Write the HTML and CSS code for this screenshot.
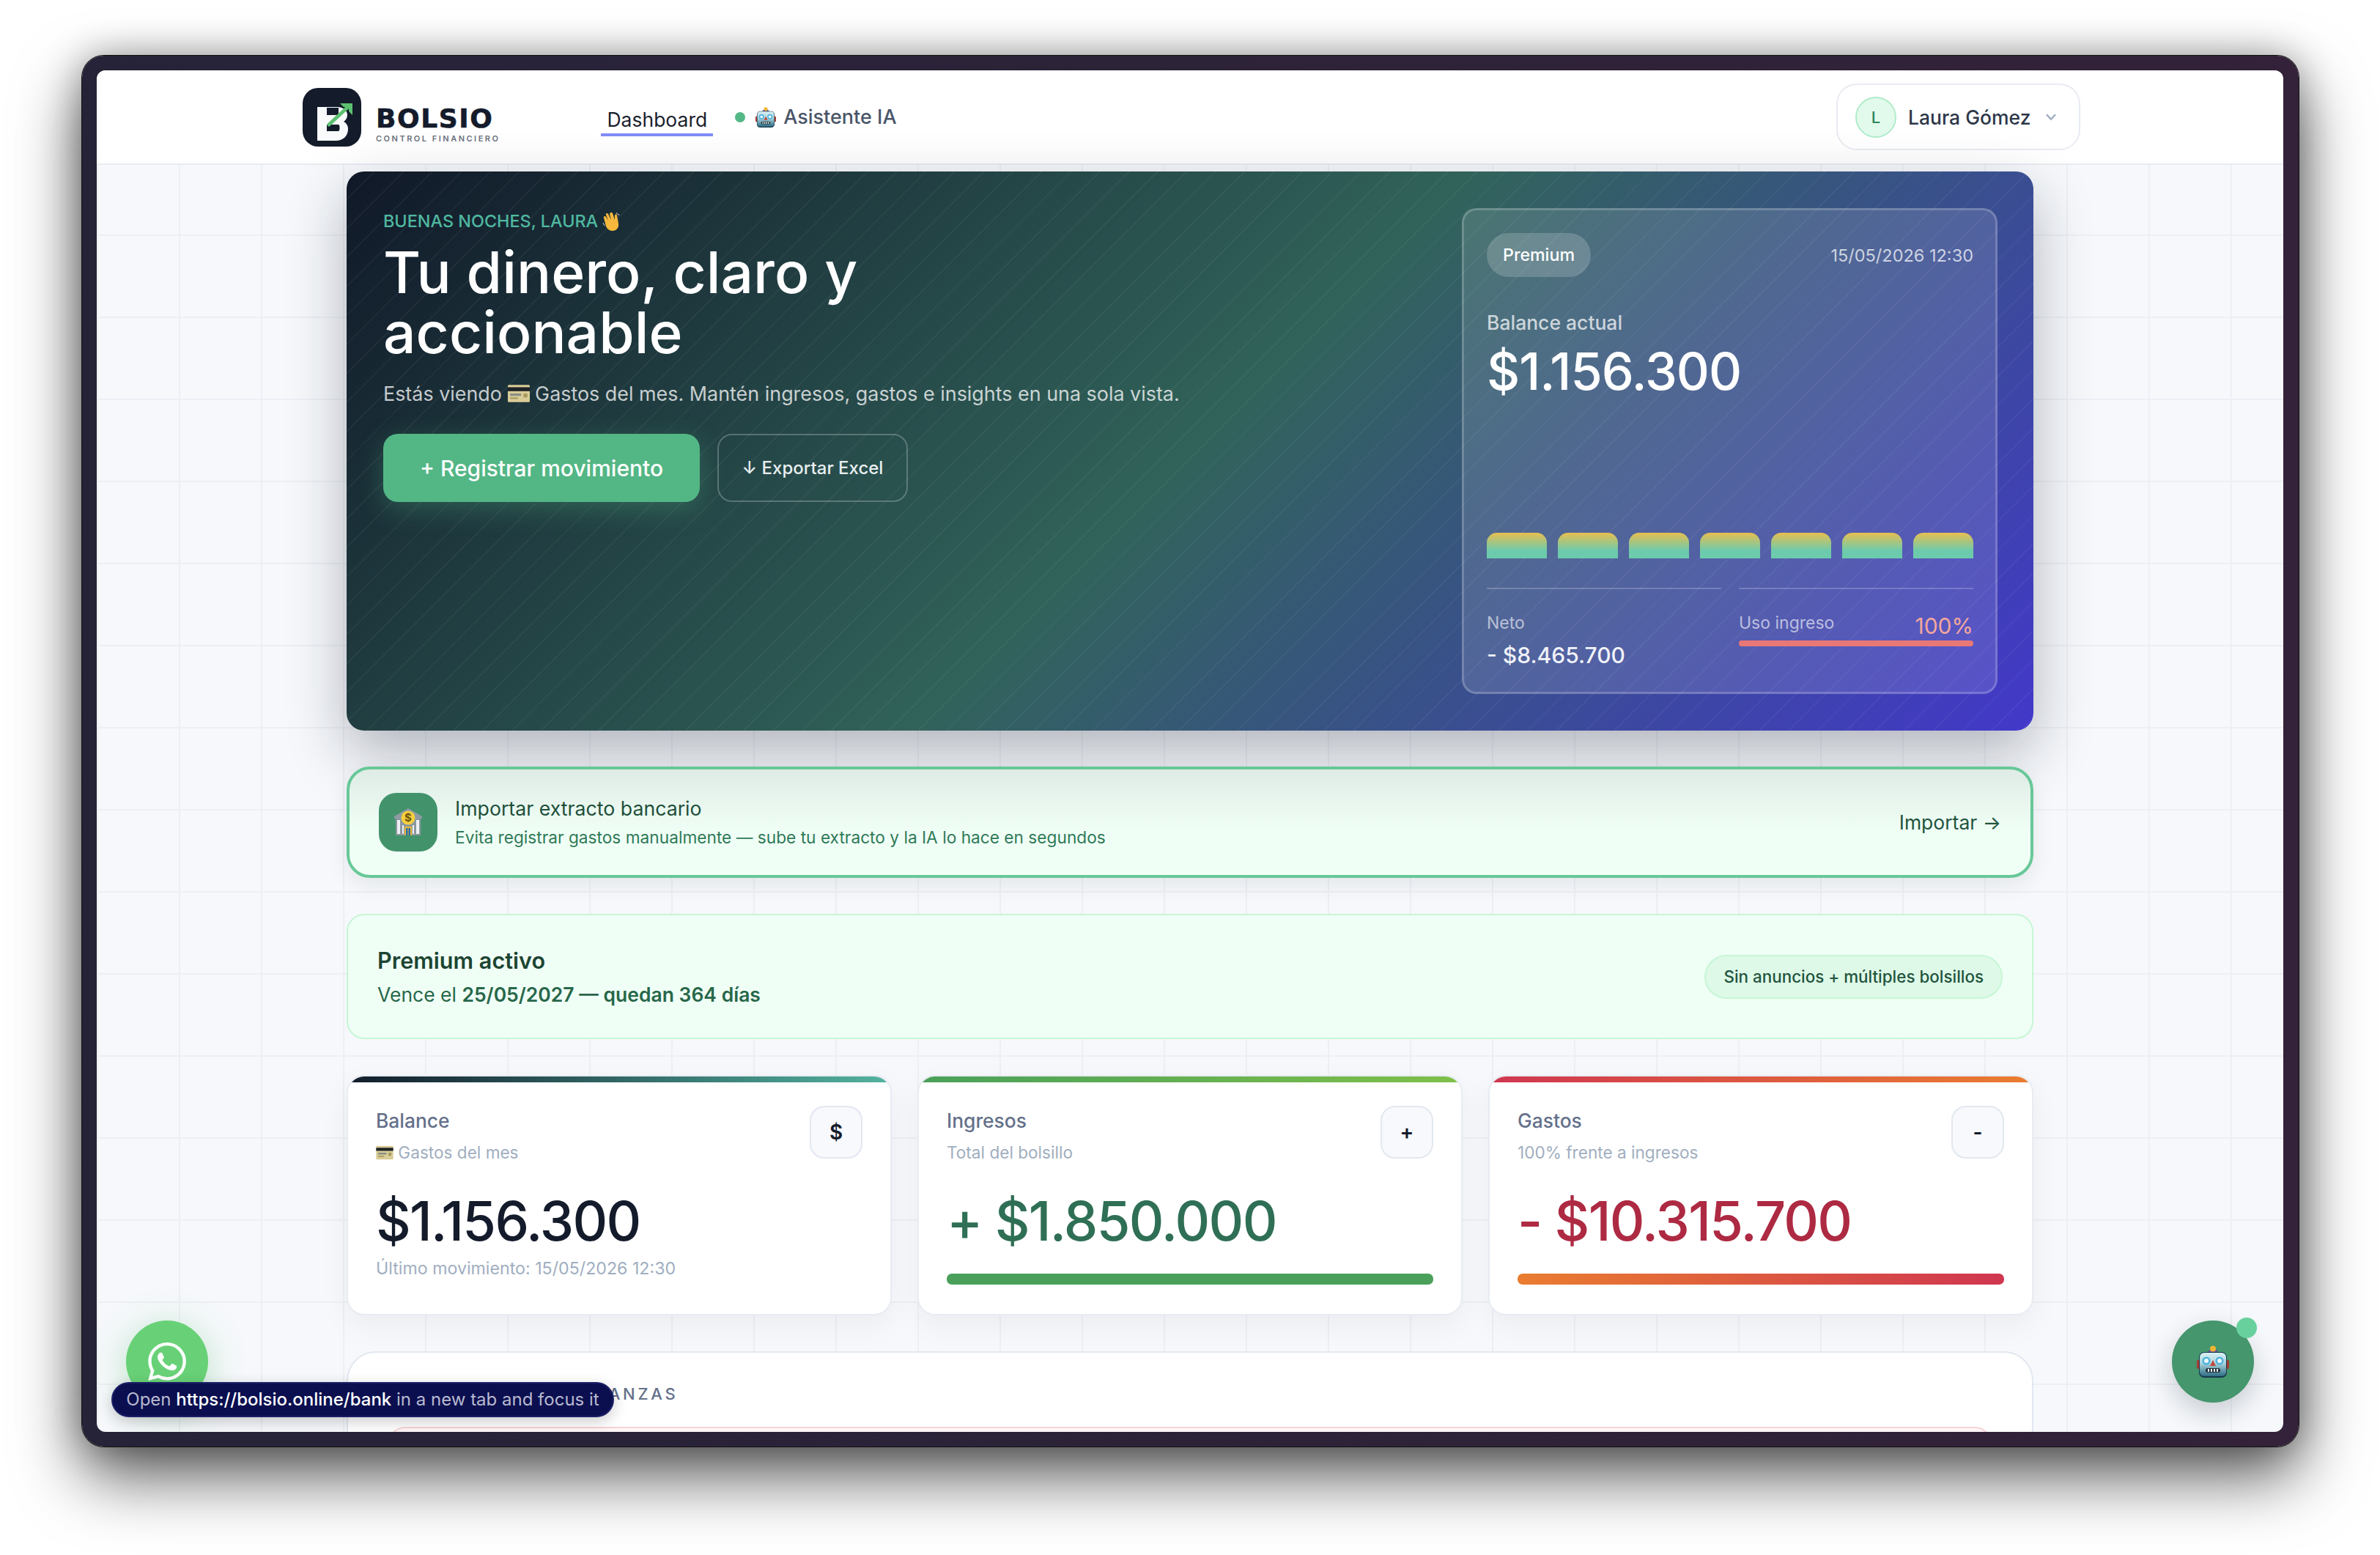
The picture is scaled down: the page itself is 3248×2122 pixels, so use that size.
FILE: index.html
```html
<!DOCTYPE html>
<html lang="es">
<head>
  <meta charset="UTF-8" />
  <title>Bolsio - Dashboard</title>
  <link rel="stylesheet" href="styles.css">
</head>
<body>
  <svg class="sprite" xmlns="http://www.w3.org/2000/svg">
    <defs>
      <linearGradient id="robotFace" x1="0" y1="0" x2="0" y2="1">
        <stop offset="0" stop-color="#d8f0f4"/>
        <stop offset="0.45" stop-color="#a9d3dc"/>
        <stop offset="1" stop-color="#2f6d84"/>
      </linearGradient>
    </defs>
    <symbol id="robot" viewBox="0 0 44 44">
      <rect x="0" y="20" width="5" height="12" rx="2" fill="#a83a34"/>
      <rect x="39" y="20" width="5" height="12" rx="2" fill="#a83a34"/>
      <path d="M15 10a7 5 0 0 1 14 0z" fill="#6a4f9c"/>
      <circle cx="22" cy="4.500" r="4" fill="#f2b632"/>
      <rect x="3" y="9" width="38" height="35" rx="7" fill="#173a4d"/>
      <rect x="4" y="10" width="36" height="32" rx="6" fill="url(#robotFace)"/>
      <circle cx="13" cy="21" r="5.500" fill="#4fb2de"/>
      <circle cx="13" cy="21" r="3" fill="#f0f9fb"/>
      <circle cx="31" cy="21" r="5.500" fill="#4fb2de"/>
      <circle cx="31" cy="21" r="3" fill="#f0f9fb"/>
      <path d="M22 20l4 8h-8z" fill="#c2483d"/>
      <rect x="12" y="31" width="20" height="6" rx="3" fill="#22303a"/>
      <path d="M16 32v4M20 32v4M24 32v4M28 32v4" stroke="#eef3f5" stroke-width="2"/>
    </symbol>
    <symbol id="card" viewBox="0 0 28 24">
      <rect x="0" y="1" width="28" height="22" rx="1.500" fill="#d9cc96"/>
      <rect x="0" y="4" width="28" height="5" fill="#1e2228"/>
      <rect x="3" y="12" width="14" height="3" fill="#8a8f86"/>
      <rect x="20" y="12" width="5" height="5" fill="#a89a5f"/>
      <rect x="3" y="17" width="10" height="2" fill="#a89a5f"/>
    </symbol>
    <symbol id="wave" viewBox="0 0 24 26">
      <path d="M2 8c-1-2 2-3 3-1l3 5L5 4c-1-2 2-3 3-1l4 8-2-8c0-2 3-3 4-1l3 9 0-6c0-2 3-2 3 0l2 11c1 6-3 10-8 10-4 0-7-2-9-6z" fill="#f5b83d"/>
      <path d="M19 1l2 3M22 3l1 2M1 15l2 4" stroke="#c9d8e0" stroke-width="1" fill="none"/>
    </symbol>
  </svg>

  <div class="frame">
    <div class="screen">
      <header class="topbar">
        <div class="brand">
          <svg class="brand-mark" viewBox="0 0 80 80">
            <rect width="80" height="80" rx="21" fill="#141b2b"/>
            <path fill-rule="evenodd" d="M20 26h27c9 0 14 5 14 11 0 4-2 7-5 9 4 2 6 6 6 10 0 9-6 16-17 16H20zM33 27v10h16V27zM33 50v9h16c2 0 2-9 0-9z" fill="#f8fafc"/>
            <path d="M36 50L64 24" stroke="#5cc071" stroke-width="5" stroke-linecap="round"/>
            <path d="M51 21h17v16l-5-5v-6H56z" fill="#5cc071"/>
          </svg>
          <div class="brand-text">
            <span class="brand-name">BOLSIO</span>
            <span class="brand-tag">CONTROL FINANCIERO</span>
          </div>
        </div>
        <nav class="nav">
          <a class="nav-link active">Dashboard</a>
          <a class="nav-link ai"><i class="nav-dot"></i><svg class="emoji-nav"><use href="#robot"/></svg>Asistente IA</a>
        </nav>
        <div class="user">
          <span class="avatar">L</span>
          <span class="user-name">Laura Gómez</span>
          <svg class="chev" viewBox="0 0 14 10"><path d="M1.500 2L7 8l5.500-6" fill="none" stroke="#a0aec0" stroke-width="2.200"/></svg>
        </div>
      </header>

      <main class="content">
        <section class="hero">
          <div class="hero-left">
            <div class="eyebrow">BUENAS NOCHES, LAURA <svg class="emoji-wave"><use href="#wave"/></svg></div>
            <h1>Tu dinero, claro y<br>accionable</h1>
            <p class="hero-sub">Estás viendo <svg class="emoji-card"><use href="#card"/></svg> Gastos del mes. Mantén ingresos, gastos e insights en una sola vista.</p>
            <div class="hero-actions">
              <button class="btn-primary">+ Registrar movimiento</button>
              <button class="btn-ghost">↓ Exportar Excel</button>
            </div>
          </div>
          <div class="glass">
            <div class="glass-top">
              <span class="glass-pill">Premium</span>
              <span class="glass-date">15/05/2026 12:30</span>
            </div>
            <div class="glass-label">Balance actual</div>
            <div class="glass-amount">$1.156.300</div>
            <div class="glass-bars">
              <i></i><i></i><i></i><i></i><i></i><i></i><i></i>
            </div>
            <div class="glass-foot">
              <div class="glass-col">
                <div class="glass-small">Neto</div>
                <div class="glass-neto">- $8.465.700</div>
              </div>
              <div class="glass-col">
                <div class="uso-row">
                  <span class="glass-small">Uso ingreso</span>
                  <span class="uso-pct">100%</span>
                </div>
                <div class="uso-bar"></div>
              </div>
            </div>
          </div>
        </section>

        <section class="import">
          <div class="import-icon">
            <svg class="emoji-bank" viewBox="0 0 40 40">
              <path d="M20 1L39 12v3H1v-3z" fill="#8d9aa3"/>
              <rect x="3" y="15" width="34" height="23" fill="#8b979f"/>
              <path d="M5 17h4v19H5zM31 17h4v19h-4zM12 24h2v12h-2zM26 24h2v12h-2z" fill="#eef1f3"/>
              <rect x="15" y="26" width="10" height="12" fill="#e8b93a"/>
              <rect x="17" y="28" width="2.500" height="10" fill="#2f6ca8"/>
              <rect x="20.500" y="28" width="2.500" height="10" fill="#2f6ca8"/>
              <circle cx="20" cy="14" r="9.500" fill="#f4ce3e"/>
              <text x="20" y="19" text-anchor="middle" class="bank-sign">$</text>
            </svg>
          </div>
          <div class="import-text">
            <div class="import-title">Importar extracto bancario</div>
            <div class="import-sub">Evita registrar gastos manualmente — sube tu extracto y la IA lo hace en segundos</div>
          </div>
          <a class="import-link">Importar →</a>
        </section>

        <section class="premium">
          <div>
            <div class="premium-title">Premium activo</div>
            <div class="premium-sub">Vence el <b>25/05/2027 — quedan 364 días</b></div>
          </div>
          <span class="premium-pill">Sin anuncios + múltiples bolsillos</span>
        </section>

        <section class="stats">
          <article class="stat stat-balance">
            <div class="stat-head">
              <div>
                <div class="stat-label">Balance</div>
                <div class="stat-sub"><svg class="emoji-card-sm"><use href="#card"/></svg> Gastos del mes</div>
              </div>
              <span class="stat-icon">$</span>
            </div>
            <div class="stat-value">$1.156.300</div>
            <div class="stat-foot">Último movimiento: 15/05/2026 12:30</div>
          </article>
          <article class="stat stat-in">
            <div class="stat-head">
              <div>
                <div class="stat-label">Ingresos</div>
                <div class="stat-sub">Total del bolsillo</div>
              </div>
              <span class="stat-icon">+</span>
            </div>
            <div class="stat-value">+ $1.850.000</div>
            <div class="stat-bar"></div>
          </article>
          <article class="stat stat-out">
            <div class="stat-head">
              <div>
                <div class="stat-label">Gastos</div>
                <div class="stat-sub">100% frente a ingresos</div>
              </div>
              <span class="stat-icon">-</span>
            </div>
            <div class="stat-value">- $10.315.700</div>
            <div class="stat-bar"></div>
          </article>
        </section>

        <section class="panel">
          <div class="panel-title">RESUMEN DE TUS FINANZAS</div>
          <div class="panel-alert"></div>
        </section>
      </main>

      <a class="fab-wa">
        <svg viewBox="0 0 24 24"><path fill="#fff" d="M17.472 14.382c-.297-.149-1.758-.867-2.03-.967-.273-.099-.471-.148-.67.15-.197.297-.767.966-.94 1.164-.173.199-.347.223-.644.075-.297-.15-1.255-.463-2.39-1.475-.883-.788-1.48-1.761-1.653-2.059-.173-.297-.018-.458.13-.606.134-.133.298-.347.446-.52.149-.174.198-.298.298-.497.099-.198.05-.371-.025-.52-.075-.149-.669-1.612-.916-2.207-.242-.579-.487-.5-.669-.51-.173-.008-.371-.01-.57-.01-.198 0-.52.074-.792.372-.272.297-1.04 1.016-1.04 2.479 0 1.462 1.065 2.875 1.213 3.074.149.198 2.096 3.2 5.077 4.487.709.306 1.262.489 1.694.625.712.227 1.36.195 1.871.118.571-.085 1.758-.719 2.006-1.413.248-.694.248-1.289.173-1.413-.074-.124-.272-.198-.57-.347m-5.421 7.403h-.004a9.87 9.87 0 01-5.031-1.378l-.361-.214-3.741.982.998-3.648-.235-.374a9.86 9.86 0 01-1.51-5.26c.001-5.45 4.436-9.884 9.888-9.884 2.64 0 5.122 1.03 6.988 2.898a9.825 9.825 0 012.893 6.994c-.003 5.45-4.437 9.884-9.885 9.884m8.413-18.297A11.815 11.815 0 0012.05 0C5.495 0 .16 5.335.157 11.892c0 2.096.547 4.142 1.588 5.945L.057 24l6.305-1.654a11.882 11.882 0 005.683 1.448h.005c6.554 0 11.89-5.335 11.893-11.893a11.821 11.821 0 00-3.48-8.413z"/></svg>
      </a>
      <div class="link-tip">Open <b>https://bolsio.online/bank</b> in a new tab and focus it</div>
      <a class="fab-ai">
        <svg class="emoji-fab"><use href="#robot"/></svg>
        <i class="fab-dot"></i>
      </a>
    </div>
  </div>
</body>
</html>
```

FILE: styles.css
```css
* {
  box-sizing: border-box;
}
html, body {
  height: 100%;
}
body {
  margin: 0;
  padding: 76px 111px 148px 112px;
  background: #fff;
  font-family: "Inter", "Liberation Sans", sans-serif;
  color: #1a202c;
  display: flex;
  overflow: hidden;
}
.sprite {
  position: absolute;
  width: 0;
  height: 0;
}
.bank-sign {
  font-family: "Inter", sans-serif;
  font-size: 15px;
  font-weight: 700;
  fill: #6b5410;
}

/* marco de la ventana */
.frame {
  flex: 1;
  padding: 20px 21px 20px 20px;
  border-radius: 30px;
  background: linear-gradient(90deg, #262338, #332239);
  box-shadow: 0 0 0 1px #111, 0 40px 90px rgba(0, 0, 0, 0.65), 0 0 50px rgba(0, 0, 0, 0.3);
}
.screen {
  position: relative;
  height: 100%;
  overflow: hidden;
  border-radius: 12px;
  background-color: #f6f8fb;
  background-image:
    linear-gradient(90deg, #eceff4 2px, transparent 2px),
    linear-gradient(#eceff4 2px, transparent 2px);
  background-size: 112px 112px;
}

/* barra superior */
.topbar {
  height: 129px;
  display: flex;
  align-items: center;
  padding: 0 277px 0 281px;
  background: #fff;
  border-bottom: 2px solid #e8ebf1;
}
.brand {
  display: flex;
  align-items: center;
  gap: 20px;
}
.brand-mark {
  width: 80px;
  height: 80px;
}
.brand-text {
  display: flex;
  flex-direction: column;
  padding-top: 18px;
}
.brand-name {
  font-family: "DejaVu Sans", "Inter", sans-serif;
  font-size: 36px;
  line-height: 40px;
  font-weight: 700;
  letter-spacing: 1.6px;
  color: #141b2b;
  -webkit-text-stroke: 0.6px #141b2b;
}
.brand-tag {
  font-size: 11px;
  line-height: 14px;
  font-weight: 600;
  letter-spacing: 2.5px;
  color: #6b7280;
}
.nav {
  display: flex;
  align-items: center;
  gap: 30px;
  margin-left: 138px;
}
.nav-link {
  display: flex;
  align-items: center;
  font-size: 27px;
  font-weight: 500;
  color: #4a5568;
}
.nav-link.active {
  padding: 13px 8px 3px;
  font-size: 26.5px;
  font-weight: 400;
  color: #1a202c;
  border-bottom: 4px solid #818cf8;
}
.nav-dot {
  width: 14px;
  height: 14px;
  margin-right: 14px;
  border-radius: 50%;
  background: #54b886;
}
.emoji-nav {
  width: 28px;
  height: 30px;
  margin-right: 10px;
}
.user {
  display: flex;
  align-items: center;
  margin-left: auto;
  width: 333px;
  height: 91px;
  padding: 0 30px 0 24px;
  background: #fff;
  border: 2px solid #e8ebf2;
  border-radius: 28px;
}
.avatar {
  width: 56px;
  height: 56px;
  display: flex;
  align-items: center;
  justify-content: center;
  font-size: 22px;
  font-weight: 500;
  color: #2f855a;
  background: #e2faec;
  border: 2px solid #b0ecca;
  border-radius: 50%;
}
.user-name {
  margin-left: 16px;
  font-size: 26.5px;
  font-weight: 500;
  color: #2d3748;
}
.chev {
  width: 16px;
  height: 11px;
  margin-left: auto;
}

/* contenido */
.content {
  display: flex;
  flex-direction: column;
  gap: 49px;
  padding: 9px 341px 0;
}
.hero {
  height: 763px;
  flex: none;
  display: flex;
  justify-content: space-between;
  padding: 50px 49px 50px 50px;
  border-radius: 24px;
  background-image:
    repeating-linear-gradient(135deg, transparent 0, transparent 26px, rgba(255, 255, 255, 0.04) 26px, rgba(255, 255, 255, 0.04) 28px),
    linear-gradient(135deg, #101828 0%, #31635a 50%, #4338ca 100%);
  box-shadow: 0 30px 80px rgba(15, 23, 42, 0.3);
}
.hero-left {
  padding-top: 2px;
  color: #fff;
}
.eyebrow {
  display: flex;
  align-items: center;
  gap: 6px;
  font-size: 23.4px;
  line-height: 32px;
  font-weight: 500;
  color: #4fb8a0;
}
.emoji-wave {
  width: 24px;
  height: 26px;
}
.hero-left h1 {
  margin: 13px 0 0;
  font-size: 78.5px;
  line-height: 82px;
  font-weight: 500;
}
.hero-sub {
  margin: 22px 0 0;
  font-size: 26.9px;
  line-height: 40px;
  color: rgba(255, 255, 255, 0.75);
}
.emoji-card {
  width: 30px;
  height: 26px;
  vertical-align: -3px;
}
.hero-actions {
  display: flex;
  gap: 24px;
  margin-top: 35px;
}
.btn-primary {
  width: 432px;
  height: 93px;
  font: 500 30px "Inter", sans-serif;
  color: #fff;
  background: #53b685;
  border: 0;
  border-radius: 20px;
  box-shadow: 0 10px 36px rgba(83, 182, 133, 0.3);
}
.btn-ghost {
  width: 260px;
  height: 93px;
  font: 500 24px "Inter", sans-serif;
  color: #e8eef0;
  background: transparent;
  border: 2px solid rgba(255, 255, 255, 0.24);
  border-radius: 20px;
}
.glass {
  width: 731px;
  display: flex;
  flex-direction: column;
  padding: 31px 30px 0 31px;
  color: #fff;
  background: rgba(255, 255, 255, 0.12);
  border: 3px solid rgba(255, 255, 255, 0.2);
  border-radius: 20px;
}
.glass-top {
  display: flex;
  align-items: center;
  justify-content: space-between;
}
.glass-pill {
  padding: 0 22px;
  height: 60px;
  display: flex;
  align-items: center;
  font-size: 23.2px;
  font-weight: 500;
  background: rgba(255, 255, 255, 0.18);
  border-radius: 30px;
}
.glass-date {
  font-size: 23.5px;
  color: rgba(255, 255, 255, 0.72);
}
.glass-label {
  margin-top: 42px;
  font-size: 26.5px;
  line-height: 40px;
  font-weight: 500;
  color: rgba(255, 255, 255, 0.72);
}
.glass-amount {
  margin-top: 5px;
  font-size: 70px;
  line-height: 84px;
  font-weight: 500;
  letter-spacing: -1px;
}
.glass-bars {
  display: flex;
  gap: 15px;
  margin-top: 178px;
}
.glass-bars i {
  flex: 1;
  height: 35px;
  border-radius: 14px 14px 0 0;
  background: linear-gradient(#e8bf50, #6ccbac 70%);
}
.glass-foot {
  display: grid;
  grid-template-columns: 1fr 1fr;
  gap: 24px;
  margin-top: 40px;
}
.glass-col {
  padding-top: 30px;
  border-top: 2px solid rgba(255, 255, 255, 0.2);
}
.glass-small {
  font-size: 23px;
  line-height: 32px;
  color: rgba(255, 255, 255, 0.62);
}
.glass-neto {
  margin-top: 6px;
  font-size: 30px;
  line-height: 44px;
  font-weight: 500;
  color: #f0f2f8;
}
.uso-row {
  display: flex;
  align-items: flex-start;
  justify-content: space-between;
  height: 40px;
}
.uso-pct {
  font-size: 30px;
  line-height: 40px;
  color: #f3a79d;
}
.uso-bar {
  height: 8px;
  border-radius: 4px;
  background: #e87876;
}

/* extracto bancario */
.import {
  height: 152px;
  flex: none;
  display: flex;
  align-items: center;
  padding: 0 40px;
  background: linear-gradient(#dfece6, #f0fff6 60%);
  border: 4px solid #68c898;
  border-radius: 32px;
  box-shadow: 0 10px 30px rgba(15, 23, 42, 0.08);
}
.import-icon {
  width: 80px;
  height: 80px;
  display: flex;
  align-items: center;
  justify-content: center;
  background: #42936b;
  border-radius: 24px;
}
.emoji-bank {
  width: 40px;
  height: 40px;
}
.import-text {
  flex: 1;
  margin-left: 24px;
}
.import-title {
  font-size: 26.7px;
  line-height: 36px;
  color: #1f4f3a;
}
.import-sub {
  margin-top: 6px;
  font-size: 22.7px;
  line-height: 32px;
  color: #2f7a58;
}
.import-link {
  font-size: 26.5px;
  color: #22543d;
}

/* premium */
.premium {
  height: 171px;
  flex: none;
  display: flex;
  align-items: center;
  justify-content: space-between;
  padding: 0 40px;
  background: #f0fff6;
  border: 2px solid #c6f6d5;
  border-radius: 24px;
}
.premium-title {
  font-size: 30.6px;
  line-height: 44px;
  font-weight: 600;
  color: #1c4532;
}
.premium-sub {
  margin-top: 4px;
  font-size: 26.5px;
  line-height: 40px;
  color: #276749;
}
.premium-sub b {
  font-weight: 600;
}
.premium-pill {
  height: 60px;
  display: flex;
  align-items: center;
  padding: 0 24px;
  font-size: 22.4px;
  font-weight: 500;
  color: #22543d;
  background: #def9e8;
  border: 2px solid #c6f6d5;
  border-radius: 30px;
}

/* tarjetas */
.stats {
  display: grid;
  grid-template-columns: repeat(3, 1fr);
  gap: 35px;
  flex: none;
}
.stat {
  position: relative;
  height: 328px;
  padding: 40px 38px 0;
  overflow: hidden;
  background: #fff;
  border: 2px solid #e8ecf2;
  border-radius: 24px;
  box-shadow: 0 14px 40px rgba(15, 23, 42, 0.05);
}
.stat::before {
  content: "";
  position: absolute;
  left: 0;
  right: 0;
  top: 0;
  height: 8px;
}
.stat-balance::before {
  background: linear-gradient(90deg, #111c2b, #53b3a0);
}
.stat-in::before {
  background: linear-gradient(90deg, #4aa05a, #7fc04a);
}
.stat-out::before {
  background: linear-gradient(90deg, #cf3650, #ea7d30);
}
.stat-head {
  display: flex;
  justify-content: space-between;
  align-items: flex-start;
}
.stat-label {
  font-size: 26.4px;
  line-height: 40px;
  font-weight: 500;
  color: #64708a;
}
.stat-sub {
  margin-top: 8px;
  font-size: 22.6px;
  line-height: 32px;
  color: #a0aec0;
}
.emoji-card-sm {
  width: 24px;
  height: 20px;
  vertical-align: -2px;
}
.stat-icon {
  width: 72px;
  height: 72px;
  display: flex;
  align-items: center;
  justify-content: center;
  font-size: 28px;
  font-weight: 600;
  color: #141b2b;
  background: #f7f9fc;
  border: 2px solid #e2e8f0;
  border-radius: 20px;
}
.stat-value {
  margin-top: 31px;
  font-size: 74px;
  line-height: 92px;
  font-weight: 550;
  letter-spacing: -1.7px;
  color: #141b2b;
}
.stat-in .stat-value {
  color: #2f6f55;
}
.stat-out .stat-value {
  color: #ad2a42;
}
.stat-foot {
  margin-top: 3px;
  font-size: 23.2px;
  line-height: 32px;
  color: #a0aec0;
}
.stat-bar {
  height: 15px;
  margin-top: 26px;
  border-radius: 7px;
}
.stat-in .stat-bar {
  background: #4aa05a;
}
.stat-out .stat-bar {
  background: linear-gradient(90deg, #ea7d30, #cf3650);
}

/* panel cortado por la ventana */
.panel {
  flex: none;
  height: 300px;
  padding: 40px 54px 0;
  background: #fff;
  border: 2px solid #e2e8f0;
  border-radius: 40px;
}
.panel-title {
  font-size: 22px;
  line-height: 32px;
  font-weight: 500;
  letter-spacing: 3.7px;
  color: #64708a;
}
.panel-alert {
  height: 120px;
  margin-top: 29px;
  background: #fff5f6;
  border: 2px solid #f7d4d8;
  border-radius: 24px;
}

/* botones flotantes */
.fab-wa, .fab-ai {
  position: absolute;
  top: 1706px;
  width: 112px;
  height: 112px;
  display: flex;
  align-items: center;
  justify-content: center;
  border-radius: 50%;
}
.fab-wa {
  left: 40px;
  background: #68d177;
  box-shadow: 0 10px 50px rgba(72, 187, 100, 0.35);
}
.fab-wa svg {
  width: 52px;
  height: 52px;
}
.fab-ai {
  left: 2832px;
  background: #45956d;
  box-shadow: 0 14px 36px rgba(15, 23, 42, 0.2);
}
.emoji-fab {
  width: 44px;
  height: 44px;
}
.fab-dot {
  position: absolute;
  right: -4px;
  top: -4px;
  width: 28px;
  height: 28px;
  border-radius: 50%;
  background: #68d09c;
}
.link-tip {
  position: absolute;
  left: 20px;
  top: 1790px;
  width: 686px;
  height: 48px;
  font-size: 24px;
  line-height: 44px;
  text-align: center;
  color: #b8b9cf;
  background: #0b0f50;
  border: 2px solid #1c2066;
  border-radius: 24px;
  box-shadow: 0 6px 20px rgba(0, 0, 0, 0.2);
  white-space: nowrap;
}
.link-tip b {
  font-weight: 500;
  color: #fff;
}
```
